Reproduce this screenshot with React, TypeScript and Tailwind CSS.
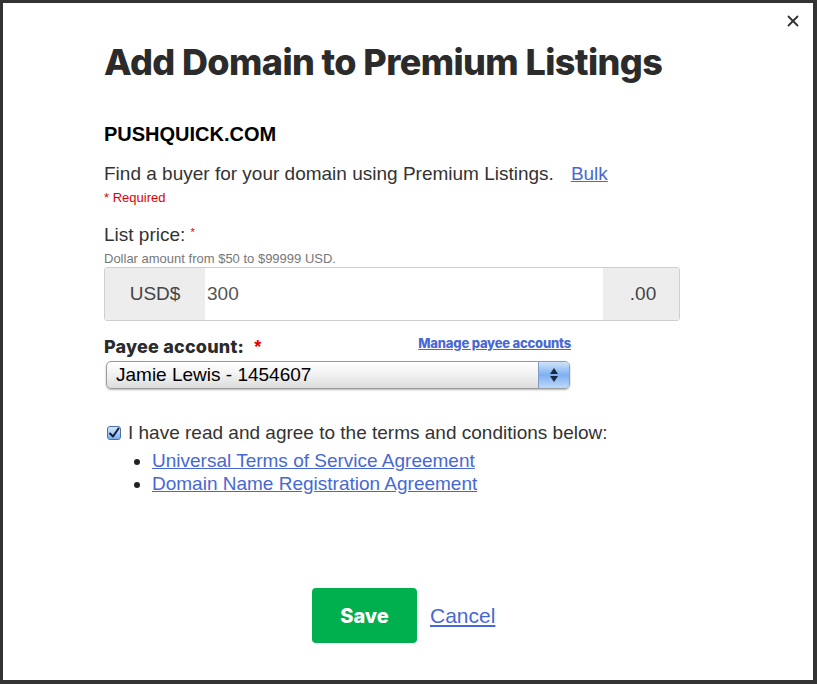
import { X } from 'lucide-react'

const body = "font-['Liberation_Sans',Arial,sans-serif]"
const display = "font-['Inter',sans-serif]"

function AquaSelect() {
  return (
    <div className="ml-[2px] mt-[3px] flex h-[28px] w-[464px] items-stretch overflow-hidden rounded-[5px] border border-[#9a9a9a] bg-gradient-to-b from-[#ffffff] via-[#f1f1f1] to-[#dcdcdc] shadow-[0_1px_2px_rgba(0,0,0,0.3)]">
      <div className={`flex flex-1 items-center pl-[9px] text-[19px] text-black ${body}`}>Jamie Lewis - 1454607</div>
      <div className="flex w-[31px] flex-col items-center justify-center gap-[2px] border-l border-[#7d9cc9] bg-gradient-to-b from-[#cfe3fb] via-[#7fb0ef] to-[#bcd9fb]">
        <svg width="8" height="6" viewBox="0 0 8 6"><path d="M4 0 L8 6 L0 6 Z" fill="#1b2a44" /></svg>
        <svg width="8" height="6" viewBox="0 0 8 6"><path d="M0 0 L8 0 L4 6 Z" fill="#1b2a44" /></svg>
      </div>
    </div>
  )
}

function AquaCheckbox() {
  return (
    <div className="flex h-[14px] w-[14px] items-center justify-center rounded-[3px] border border-[#4a6fa8] bg-gradient-to-b from-[#d4e6fb] to-[#7fb0ee]">
      <svg width="12" height="12" viewBox="0 0 12 12">
        <path d="M2 6.5 L5 9.5 L10.5 1.5" stroke="#10203a" strokeWidth="2" fill="none" strokeLinecap="round" strokeLinejoin="round" />
      </svg>
    </div>
  )
}

export default function App() {
  return (
    <div className="relative h-[684px] w-[817px] border-b-[4px] border-l-[3px] border-r-[4px] border-t-[3px] border-[#333333] bg-white">
      <button className="absolute right-[11px] top-[9px] text-[#333]">
        <X size={18} strokeWidth={2.4} />
      </button>

      <div className="pl-[101px] pt-[39px]">
        <h1 className={`text-[36px] font-extrabold leading-[40px] tracking-[-0.6px] text-[#2b2b2b] ${display}`}>
          Add Domain to Premium Listings
        </h1>

        <div className={`mt-[40px] text-[20px] font-bold leading-[24px] text-black ${body}`}>PUSHQUICK.COM</div>

        <div className={`mt-[17px] text-[19px] leading-[22px] text-[#333] ${body}`}>
          Find a buyer for your domain using Premium Listings.
          <a href="#" className="ml-[17px] text-[#4768d4] underline">Bulk</a>
        </div>

        <div className={`mt-[5px] text-[13px] leading-[16px] text-[#e00000] ${body}`}>* Required</div>

        <div className={`mt-[18px] text-[19px] leading-[22px] text-[#333] ${body}`}>
          List price: <span className="relative -top-[5px] text-[11px] text-[#e00000]">*</span>
        </div>
        <div className={`mt-[3px] text-[13px] leading-[15px] text-[#777] ${body}`}>Dollar amount from $50 to $99999 USD.</div>

        <div className={`mt-[1px] flex h-[54px] w-[576px] overflow-hidden rounded-[3px] border border-[#cfcfcf] text-[19px] ${body}`}>
          <div className="flex w-[100px] items-center justify-center bg-[#ededed] text-[#444]">USD$</div>
          <div className="flex flex-1 items-center bg-white pl-[2px] text-[#555]">300</div>
          <div className="flex w-[76px] items-center justify-center bg-[#ededed] pl-[4px] text-[#444]">.00</div>
        </div>

        <div className="mt-[15px] flex w-[467px] items-start justify-between">
          <div className={`text-[18px] font-extrabold leading-[22px] tracking-[0.2px] text-[#2b2b2b] ${display}`}>
            Payee account: <span className={`ml-[6px] text-[#e00000] ${body}`}>*</span>
          </div>
          <a href="#" className={`mt-[0px] text-[13px] font-extrabold leading-[15px] tracking-[-0.2px] text-[#4768d4] underline ${display}`}>
            Manage payee accounts
          </a>
        </div>
        <AquaSelect />

        <div className={`ml-[3px] mt-[33px] flex items-center gap-[7px] text-[19px] leading-[22px] text-[#333] ${body}`}>
          <AquaCheckbox />
          <span>I have read and agree to the terms and conditions below:</span>
        </div>
        <ul className={`mt-[5px] pl-[48px] text-[19px] leading-[23px] ${body}`}>
          <li className="list-disc text-[#222] marker:text-[#222]">
            <a href="#" className="text-[#4768d4] underline">Universal Terms of Service Agreement</a>
          </li>
          <li className="list-disc text-[#222] marker:text-[#222]">
            <a href="#" className="text-[#4768d4] underline">Domain Name Registration Agreement</a>
          </li>
        </ul>

        <div className="mt-[93px] flex items-center gap-[13px] pl-[208px]">
          <button className={`h-[55px] w-[105px] rounded-[4px] bg-[#00b04f] text-[20px] font-extrabold text-white ${display}`}>Save</button>
          <a href="#" className={`text-[21px] text-[#4768d4] underline ${body}`}>Cancel</a>
        </div>
      </div>
    </div>
  )
}
